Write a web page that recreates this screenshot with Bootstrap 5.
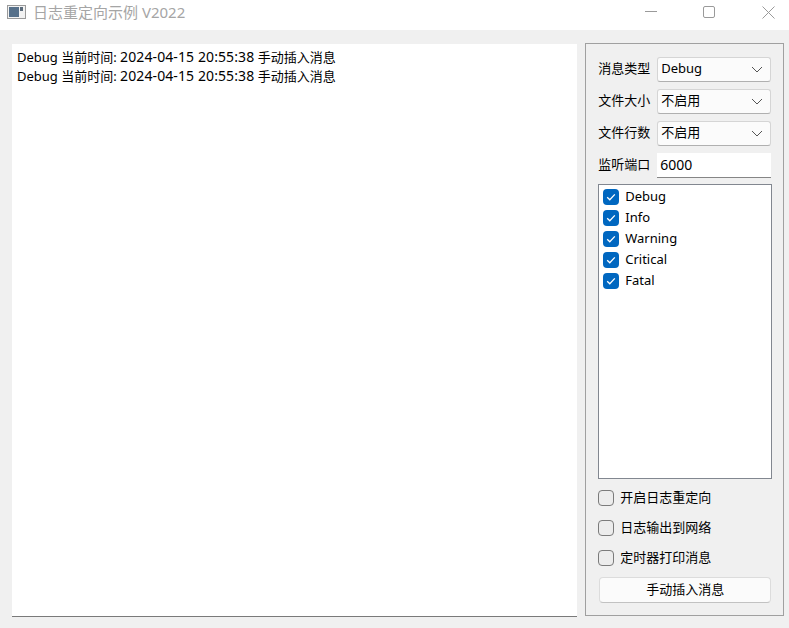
<!doctype html>
<html lang="zh"><head><meta charset="utf-8"><title>日志重定向示例 V2022</title>
<link href="https://cdn.jsdelivr.net/npm/bootstrap@5.3.0/dist/css/bootstrap.min.css" rel="stylesheet">
<style>
html,body{height:628px;overflow:hidden}
body{background:#f0f0f0;font-family:"Noto Sans","Noto Sans CJK SC",sans-serif;font-size:13px;color:#000}
.tbar{height:30px;background:#fff;padding-bottom:6px}
.tlogo{margin:0 7px 0 7px}
.ttl{font-size:15px;color:#a5a5a5;line-height:24px}
.wbtn{width:40px;height:22px}
.wbtn+.wbtn{margin-left:18px}
.wbtn+.wbtn+.wbtn{margin-left:19px}
.wbox{margin-right:1px}
.mainarea{height:598px;padding:14px 5px 11px 12px;gap:8px}
.logbox{width:566px;background:#fff;border-bottom:1px solid #7a7a7a;padding:4px 5px;line-height:19px;white-space:nowrap}
.dnum{font-size:14px;letter-spacing:.1px;line-height:1}
.side{width:199px;height:573px;margin-top:-1px;border:1px solid #a0a0a0;padding:12px 11px 11px 12px}
.frow{height:26px;margin-bottom:6px}
.flabel{width:59px;white-space:nowrap}
.cmb{width:114px;height:25px;background:#fbfbfb;border:1px solid #d5d5d5;border-bottom-color:#b0b0b0;border-radius:3px;padding:0 4px 0 3px}
.cmb svg{margin-left:auto;margin-right:3px}
.numin{width:114px;height:25px;background:#fff;border-bottom:1px solid #868686;padding:0 3px;font-size:14px}
.chklist{height:295px;margin:0 0 4px 0;background:#fff;border:1px solid #828790;padding:1px 4px}
.chkrow{height:21px;line-height:21px}
.cbx{width:16px;height:16px;flex:none;border-radius:4px}
.cbx-on{background:#0067c0;margin-right:6px}
.cbx-off{background:#ececec;border:1px solid #7b7b7b;margin-right:6px}
.optrow{height:30px;white-space:nowrap}
.actbtn{height:26px;width:172px;margin:4px 0 0 1px;background:#fbfbfb;border:1px solid #dcdcdc;border-bottom-color:#c2c2c2;border-radius:4px;font-size:13px;padding:0;color:#000}
</style></head><body>
<div class="tbar d-flex align-items-center">
 <svg class="tlogo" width="19" height="14" viewBox="0 0 19 14"><rect x=".5" y=".5" width="18" height="13" fill="#f2f2f2" stroke="#9a9a9a"/><rect x="2" y="2" width="10" height="10" fill="#56708a"/><rect x="13" y="2" width="3" height="4" fill="#5a6a7a"/></svg>
 <span class="ttl">日志重定向示例 V2022</span>
 <div class="wbox ms-auto d-flex">
  <div class="wbtn d-flex align-items-center justify-content-center"><svg width="12" height="12"><path d="M0 5.5H12" stroke="#9a9a9a"/></svg></div>
  <div class="wbtn d-flex align-items-center justify-content-center"><svg width="12" height="12"><rect x=".5" y=".5" width="11" height="11" rx="1.5" fill="none" stroke="#9a9a9a"/></svg></div>
  <div class="wbtn d-flex align-items-center justify-content-center"><svg width="13" height="13"><path d="M.5.5l12 12M12.5.5l-12 12" stroke="#9a9a9a"/></svg></div>
 </div>
</div>
<div class="mainarea d-flex">
 <div class="logbox"><div>Debug 当前时间: <span class="dnum">2024-04-15 20:55:38</span> 手动插入消息</div><div>Debug 当前时间: <span class="dnum">2024-04-15 20:55:38</span> 手动插入消息</div></div>
 <div class="side d-flex flex-column">
  <div class="frow d-flex align-items-center"><span class="flabel">消息类型</span><div class="cmb d-flex align-items-center">Debug<svg width="12" height="7"><path d="M1 1l5 5 5-5" fill="none" stroke="#555"/></svg></div></div>
  <div class="frow d-flex align-items-center"><span class="flabel">文件大小</span><div class="cmb d-flex align-items-center">不启用<svg width="12" height="7"><path d="M1 1l5 5 5-5" fill="none" stroke="#555"/></svg></div></div>
  <div class="frow d-flex align-items-center"><span class="flabel">文件行数</span><div class="cmb d-flex align-items-center">不启用<svg width="12" height="7"><path d="M1 1l5 5 5-5" fill="none" stroke="#555"/></svg></div></div>
  <div class="frow d-flex align-items-center"><span class="flabel">监听端口</span><div class="numin d-flex align-items-center">6000</div></div>
  <div class="chklist">
   <div class="chkrow d-flex align-items-center"><span class="cbx cbx-on d-flex align-items-center justify-content-center"><svg width="10" height="8"><path d="M1.2 4.2l2.6 2.6 5-5.4" fill="none" stroke="#fff" stroke-width="1.3"/></svg></span>Debug</div>
   <div class="chkrow d-flex align-items-center"><span class="cbx cbx-on d-flex align-items-center justify-content-center"><svg width="10" height="8"><path d="M1.2 4.2l2.6 2.6 5-5.4" fill="none" stroke="#fff" stroke-width="1.3"/></svg></span>Info</div>
   <div class="chkrow d-flex align-items-center"><span class="cbx cbx-on d-flex align-items-center justify-content-center"><svg width="10" height="8"><path d="M1.2 4.2l2.6 2.6 5-5.4" fill="none" stroke="#fff" stroke-width="1.3"/></svg></span>Warning</div>
   <div class="chkrow d-flex align-items-center"><span class="cbx cbx-on d-flex align-items-center justify-content-center"><svg width="10" height="8"><path d="M1.2 4.2l2.6 2.6 5-5.4" fill="none" stroke="#fff" stroke-width="1.3"/></svg></span>Critical</div>
   <div class="chkrow d-flex align-items-center"><span class="cbx cbx-on d-flex align-items-center justify-content-center"><svg width="10" height="8"><path d="M1.2 4.2l2.6 2.6 5-5.4" fill="none" stroke="#fff" stroke-width="1.3"/></svg></span>Fatal</div>
  </div>
  <div class="optrow d-flex align-items-center"><span class="cbx cbx-off"></span>开启日志重定向</div>
  <div class="optrow d-flex align-items-center"><span class="cbx cbx-off"></span>日志输出到网络</div>
  <div class="optrow d-flex align-items-center"><span class="cbx cbx-off"></span>定时器打印消息</div>
  <button class="btn actbtn" type="button">手动插入消息</button>
 </div>
</div>
<script src="https://cdn.jsdelivr.net/npm/bootstrap@5.3.0/dist/js/bootstrap.bundle.min.js"></script>
</body></html>
